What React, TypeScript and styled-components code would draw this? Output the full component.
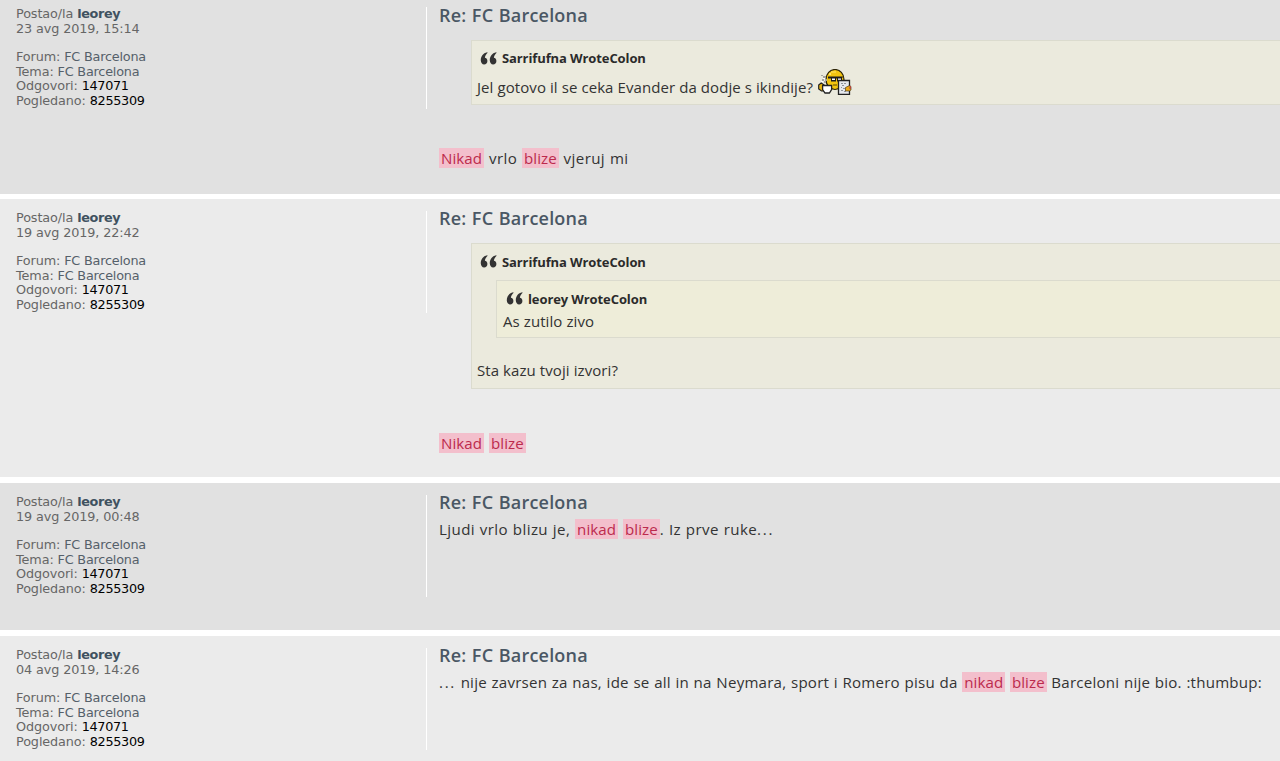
import type { ReactNode } from "react";
import styled, { createGlobalStyle } from "styled-components";

const uiFont = `"DejaVu Sans", Verdana, sans-serif`;
const textFont = `"Open Sans", "Trebuchet MS", sans-serif`;

const GlobalStyle = createGlobalStyle`
  body {
    margin: 0;
    background: #ffffff;
    overflow: hidden;
  }
`;

const Page = styled.main`
  display: flex;
  flex-direction: column;
  height: 761px;
  overflow: hidden;
`;

const Post = styled.article<{ $height: number; $gap: number; $dark: boolean }>`
  display: flex;
  flex: none;
  box-sizing: border-box;
  height: ${({ $height }) => $height}px;
  margin-bottom: ${({ $gap }) => $gap}px;
  padding: 12px 0 0 16px;
  background: ${({ $dark }) => ($dark ? "#e1e1e1" : "#ebebeb")};

  &:first-child {
    margin-top: -5px;
  }
`;

const Profile = styled.dl`
  flex: none;
  box-sizing: border-box;
  width: 411px;
  height: 102px;
  margin: 0;
  padding-top: 0.4px;
  border-right: 1px solid #ffffff;
  font-family: ${uiFont};
  font-size: 12.8px;
  letter-spacing: -0.11px;
  line-height: 14.8px;
  color: #666666;
  white-space: nowrap;

  dd {
    margin: 0;
  }
`;

const Spaced = styled.dd`
  && {
    margin-top: 12.8px;
  }
`;

const Author = styled.strong`
  letter-spacing: -0.35px;
  color: #3f5160;
`;

const Topic = styled.span`
  letter-spacing: -0.2px;
  color: #55606a;
`;

const Count = styled.span`
  letter-spacing: -0.3px;
  color: #000000;
`;

const Content = styled.div<{ $offset: number }>`
  width: 900px;
  flex: none;
  padding: ${({ $offset }) => $offset}px 0 0 12px;
  font-family: ${textFont};
  font-size: 15px;
  color: #333333;
  white-space: nowrap;
`;

const Title = styled.h3`
  margin: -4px 0 0;
  font-size: 18px;
  font-weight: 600;
  letter-spacing: 0.2px;
  word-spacing: 0.6px;
  line-height: 22px;
  color: #4a5764;
`;

const Quote = styled.blockquote<{ $nested?: boolean }>`
  box-sizing: border-box;
  margin: ${({ $nested }) => ($nested ? "7px 0 21px 19px" : "14px 0 0 32px")};
  padding: 6px 6px 6px ${({ $nested }) => ($nested ? 6 : 5)}px;
  border: 1px solid #dbdbce;
  background: ${({ $nested }) => ($nested ? "#eeedd9" : "#ebeadd")};
`;

const Cite = styled.cite<{ $height?: number }>`
  display: flex;
  align-items: center;
  height: ${({ $height = 23 }) => $height}px;
  gap: 4px;
  padding-left: 3px;
  font-size: 13px;
  font-style: normal;
  font-weight: 700;
  letter-spacing: -0.1px;
  color: #2b2b2b;
`;

const QuoteText = styled.div<{ $height: number; $bottom?: boolean }>`
  display: flex;
  align-items: ${({ $bottom }) => ($bottom ? "flex-end" : "flex-start")};
  gap: 5px;
  height: ${({ $height }) => $height}px;
  line-height: 22px;
  letter-spacing: 0.08px;
`;

const Line = styled.div<{ $top: number; $tracking?: number }>`
  margin-top: ${({ $top }) => $top}px;
  font-size: 15.1px;
  line-height: 22px;
  letter-spacing: ${({ $tracking = 0.4 }) => $tracking}px;
  word-spacing: 0.5px;
`;

const Hit = styled.span`
  padding: 0 2px;
  background: #f3bfcc;
  color: #bc2a4d;
  letter-spacing: 0.08px;
`;

const Dots = styled.span`
  letter-spacing: 1.7px;
`;

const QuoteSvg = styled.svg`
  width: 18px;
  height: 13px;
`;

const SmileySvg = styled.svg`
  width: 34px;
  height: 26px;
  margin-bottom: 3px;
`;

const QuoteIcon = () => (
  <QuoteSvg viewBox="0 0 18 13">
    <path
      fill="#333333"
      d="M7.2.3C3 1.2.6 4.6.8 8.600c.1 2.400 1.400 3.900 3.300 3.900s3.300-1.400 3.300-3.400-1-3.100-2.500-3.300C5 4 6 2.400 7.600.700zM16.200.3C12 1.200 9.600 4.600 9.800 8.600c.1 2.400 1.400 3.900 3.300 3.900s3.300-1.400 3.300-3.400-1-3.100-2.500-3.300C14 4 15 2.400 16.600.700z"
    />
  </QuoteSvg>
);

const CoffeeSmiley = () => (
  <SmileySvg viewBox="0 0 34 26">
    {/* face */}
    <ellipse cx="17" cy="10.5" rx="9" ry="10" fill="#f2c40f" stroke="#2b2205" strokeWidth="1.2" />
    <path d="M13 2.5h5v1h-5zM11 4h2v2h-2z" fill="#ffe36b" />
    <path d="M10 7.5h15v1h-1v4h-5v-3h-1v3h-5v-3h-3z" fill="#1c1c1c" />
    <path d="M14 9.5h3v1.5h-3zM20 9.5h3v1.5h-3z" fill="#ffffff" />
    <path d="M15 15.5h4v1h-4z" fill="#5d4700" />
    {/* steam */}
    <path d="M3 6h2v1H3zM5 7h3v2H5zM4 10h2v2H4zM7 10h2v2H7zM6 12h2v2H6z" fill="#a5a5a0" />
    <path d="M5 9h2v1H5zM3 12h2v1H3z" fill="#ffffff" />
    {/* hand and cup */}
    <path d="M.7 16l2.500-2 3 2v6H3.500L.7 20z" fill="#e6b40f" stroke="#222222" strokeWidth="1.2" />
    <path d="M4.600 16.500h9v4l-2.200 3.500H7l-2.400-3.500z" fill="#ffffff" stroke="#222222" strokeWidth="1.3" />
    {/* paper */}
    <path d="M20.500 11.500h11v14h-11z" fill="#e6e9ee" stroke="#222222" strokeWidth="1.3" />
    <path
      d="M23 14h2v1h-2zM26 14h2v1h-2zM24 16h2v1h-2zM23 18h1v1h-1zM25 19h2v1h-2zM23 21h2v1h-2zM26 22h2v1h-2z"
      fill="#8f949b"
    />
    <path d="M27.500 18.500l4-2 1.500 1v3.500l-1.500 1h-4z" fill="#e9a91b" stroke="#3a2a08" strokeWidth="0.6" />
    <path d="M31.500 17H33v3h-1.500z" fill="#b4483a" />
  </SmileySvg>
);

type PostData = {
  height: number;
  gap: number;
  offset?: number;
  date: string;
  body: ReactNode;
};

const posts: PostData[] = [
  {
    height: 199,
    gap: 5,
    offset: 1,
    date: "23 avg 2019, 15:14",
    body: (
      <>
        <Quote>
          <Cite $height={22}>
            <QuoteIcon />
            Sarrifufna WroteColon
          </Cite>
          <QuoteText $height={29} $bottom>
            Jel gotovo il se ceka Evander da dodje s ikindije? <CoffeeSmiley />
          </QuoteText>
        </Quote>
        <Line $top={42}>
          <Hit>Nikad</Hit> vrlo <Hit>blize</Hit> vjeruj mi
        </Line>
      </>
    ),
  },
  {
    height: 278,
    gap: 6,
    date: "19 avg 2019, 22:42",
    body: (
      <>
        <Quote>
          <Cite>
            <QuoteIcon />
            Sarrifufna WroteColon
          </Cite>
          <Quote $nested>
            <Cite>
              <QuoteIcon />
              leorey WroteColon
            </Cite>
            <QuoteText $height={21}>As zutilo zivo</QuoteText>
          </Quote>
          <QuoteText $height={23}>Sta kazu tvoji izvori?</QuoteText>
        </Quote>
        <Line $top={43}>
          <Hit>Nikad</Hit> <Hit>blize</Hit>
        </Line>
      </>
    ),
  },
  {
    height: 147,
    gap: 6,
    date: "19 avg 2019, 00:48",
    body: (
      <Line $top={5}>
        Ljudi vrlo blizu je, <Hit>nikad</Hit> <Hit>blize</Hit>. Iz prve ruke<Dots>...</Dots>
      </Line>
    ),
  },
  {
    height: 140,
    gap: 0,
    date: "04 avg 2019, 14:26",
    body: (
      <Line $top={5} $tracking={0.22}>
        <Dots>...</Dots> nije zavrsen za nas, ide se all in na Neymara, sport i Romero pisu da <Hit>nikad</Hit>{" "}
        <Hit>blize</Hit> Barceloni nije bio. :thumbup:
      </Line>
    ),
  },
];

const App = () => {
  return (
    <>
      <GlobalStyle />
      <Page>
        {posts.map((post, index) => (
          <Post key={post.date} $height={post.height} $gap={post.gap} $dark={index % 2 === 0}>
            <Profile>
              <dt>
                Postao/la <Author>leorey</Author>
              </dt>
              <dd>{post.date}</dd>
              <Spaced>
                Forum: <Topic>FC Barcelona</Topic>
              </Spaced>
              <dd>
                Tema: <Topic>FC Barcelona</Topic>
              </dd>
              <dd>
                Odgovori: <Count>147071</Count>
              </dd>
              <dd>
                Pogledano: <Count>8255309</Count>
              </dd>
            </Profile>
            <Content $offset={post.offset ?? 0}>
              <Title>Re: FC Barcelona</Title>
              {post.body}
            </Content>
          </Post>
        ))}
      </Page>
    </>
  );
};

export default App;
